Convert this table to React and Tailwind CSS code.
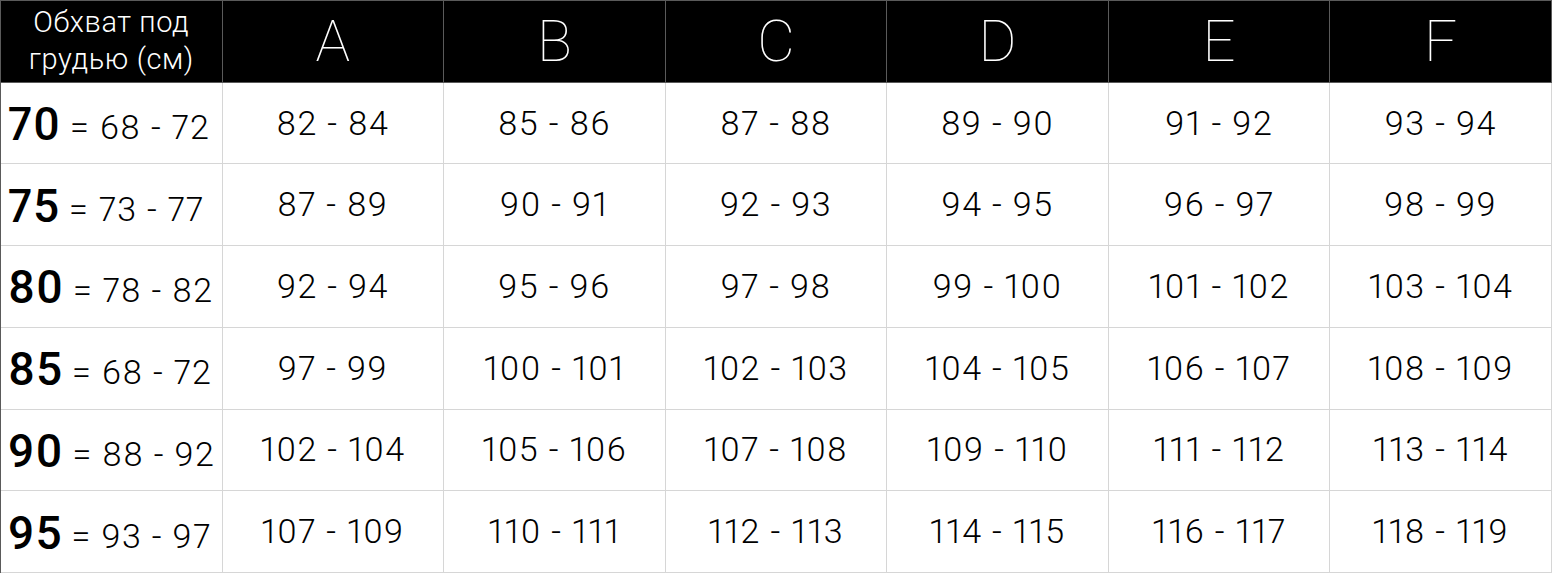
import React from 'react';

const cups = ['A', 'B', 'C', 'D', 'E', 'F'];

const rows = [
  { band: '70', range: '68 - 72', sizes: ['82 - 84', '85 - 86', '87 - 88', '89 - 90', '91 - 92', '93 - 94'] },
  { band: '75', range: '73 - 77', sizes: ['87 - 89', '90 - 91', '92 - 93', '94 - 95', '96 - 97', '98 - 99'] },
  { band: '80', range: '78 - 82', sizes: ['92 - 94', '95 - 96', '97 - 98', '99 - 100', '101 - 102', '103 - 104'] },
  { band: '85', range: '68 - 72', sizes: ['97 - 99', '100 - 101', '102 - 103', '104 - 105', '106 - 107', '108 - 109'] },
  { band: '90', range: '88 - 92', sizes: ['102 - 104', '105 - 106', '107 - 108', '109 - 110', '111 - 112', '113 - 114'] },
  { band: '95', range: '93 - 97', sizes: ['107 - 109', '110 - 111', '112 - 113', '114 - 115', '116 - 117', '118 - 119'] },
];

function App() {
  return (
    <div
      className="w-[1552px] h-[573px] grid grid-cols-7 grid-rows-7 bg-white text-black border-l border-t border-[#5a5a5a] proportional-nums"
      style={{ fontFamily: 'Roboto, "Noto Sans", sans-serif' }}
    >
      <div className="bg-black border-r border-b border-[#5a5a5a] flex flex-col items-center justify-center text-white text-[29px] font-light leading-[37px] tracking-[0.02em]">
        <span>Обхват под</span>
        <span>грудью (см)</span>
      </div>
      {cups.map(cup => (
        <div
          key={cup}
          className="bg-black border-r border-b border-[#5a5a5a] flex items-center justify-center text-white text-[58px] font-thin"
        >
          {cup}
        </div>
      ))}

      {rows.map(row => (
        <React.Fragment key={row.band}>
          <div className="border-r border-b border-[#d6d6d6] flex items-center pl-[7px] pt-[2px] whitespace-nowrap">
            <span className="text-[46px] font-medium leading-none tracking-[0.02em]">{row.band}</span>
            <span className="text-[34px] font-light leading-none ml-[9px] mt-[6px] tracking-[0.04em]">= {row.range}</span>
          </div>
          {row.sizes.map((size, i) => (
            <div
              key={i}
              className="border-r border-b border-[#d6d6d6] flex items-center justify-center text-[34px] font-light tracking-[0.04em]"
            >
              {size}
            </div>
          ))}
        </React.Fragment>
      ))}
    </div>
  );
}

export default App;
